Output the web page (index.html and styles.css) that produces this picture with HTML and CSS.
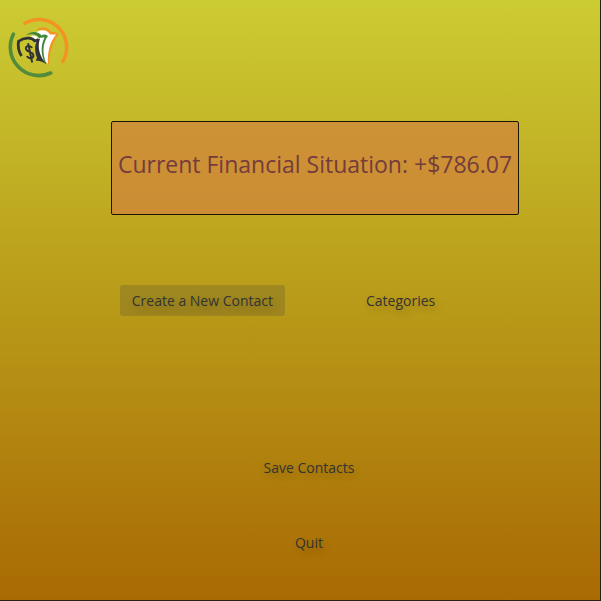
FILE: index.html
```html
<!DOCTYPE html>
<html lang="en">
<head>
<meta charset="utf-8">
<meta name="viewport" content="width=device-width, initial-scale=1">
<title>Contacts</title>
<link rel="stylesheet" href="styles.css">
</head>
<body>
<div class="window">
  <header class="header">
    <svg class="logo" viewBox="0 0 80 80" aria-hidden="true">
      <g fill="none" stroke-linecap="round" stroke-width="3.600">
        <path stroke="#f39322" d="M25 15.300A27.700 27.700 0 0 1 62.700 53.500"/>
        <path stroke="#518b3b" d="M13.400 26.200A28.500 28.500 0 0 0 50.700 65"/>
      </g>
      <path fill="#f39322" d="M36 22.500C40 18 48 18 51 24Q55 22.800 59 26.300C53 33 49.500 43 49 56.500L46 54C45.500 43 47 34 54 27L50 27C47 22 43 21 36 22.500Z"/>
      <path fill="#fff" d="M36 24.500C41 21 47.500 21.500 50 26.500L56 26.500C50 34 47.500 43 47.800 56L42 50L42 32Z"/>
      <path fill="#3f873a" d="M26 27C32 22.500 38.500 23.500 41.500 27.500Q44.500 25.500 48 28C42.500 35 42 46 46.500 56L43 53C40 44 40 36 43.500 30L39.500 30.500C37 26.500 32 25.500 26 27Z"/>
      <path fill="#fff" d="M31 28C35 27 37 28 38.500 30.500Q41 29 44.500 29.500C40.700 37 40.700 46 44.500 54.500L39 49L36 36Z"/>
      <path fill="none" stroke="#303236" stroke-width="2.800" stroke-linejoin="round" d="M21.500 48C18.500 43.500 17.700 38.500 18.500 33.300C24 29.300 31.500 28.800 35 33L38.500 31.500"/>
      <path fill="#303236" d="M34.500 32.500L40 30.500C37 39 39.500 48 46.300 56.200C43 54 40 52.500 35.800 52.800L37 49.800C34.500 44 34.700 37 36.500 33.500Z"/>
      <path fill="none" stroke="#303236" stroke-width="2" stroke-linecap="round" d="M31.600 39.300C28 36.500 24.800 39 26.300 41.600C28 44.300 32.500 43.500 33.300 46.800C34 50.500 29.700 51.500 27.300 48.700M28.300 36L32 53.700"/>
    </svg>
  </header>
  <main class="content">
    <h1 class="balance">Current Financial Situation: +$786.07</h1>
    <div class="row">
      <button type="button" class="action action-active">Create a New Contact</button>
      <button type="button" class="action">Categories</button>
    </div>
    <div class="stack">
      <button type="button" class="action">Save Contacts</button>
      <button type="button" class="action">Quit</button>
    </div>
  </main>
</div>
</body>
</html>
```
FILE: styles.css
```css
* {
  box-sizing: border-box;
}

body {
  margin: 0;
  font-family: "Segoe UI", "Open Sans", "Noto Sans", sans-serif;
}

.window {
  min-height: 100vh;
  border-right: 1px solid #292016;
  border-bottom: 1px solid #292016;
  background: linear-gradient(#cccc33, #b99b19 50%, #a96a04);
}

.header {
  padding-top: 8px;
}

.logo {
  display: block;
  width: 80px;
  height: 80px;
}

.content {
  display: flex;
  flex-direction: column;
  align-items: center;
  padding: 33px 0 41px 30px;
}

.balance {
  margin: 0;
  padding: 24px 6px 32px;
  border: 1px solid #1b1508;
  border-radius: 2px;
  background: rgba(210, 130, 60, 0.7);
  color: #743c3c;
  font-size: 23px;
  font-weight: 400;
  line-height: 36px;
  white-space: nowrap;
}

.row {
  display: flex;
  gap: 69px;
  margin: 70px 63px 0 0;
}

.stack {
  display: flex;
  flex-direction: column;
  align-items: center;
  gap: 44px;
  margin: 136px 12px 0 0;
}

.action {
  padding: 0 12px;
  border: 0;
  border-radius: 3px;
  background: transparent;
  color: #333;
  font: inherit;
  font-size: 14px;
  line-height: 31px;
  text-shadow: 2px 4px 8px rgba(0, 0, 0, 0.2);
}

.action-active {
  background: rgba(98, 88, 46, 0.3);
}
```
